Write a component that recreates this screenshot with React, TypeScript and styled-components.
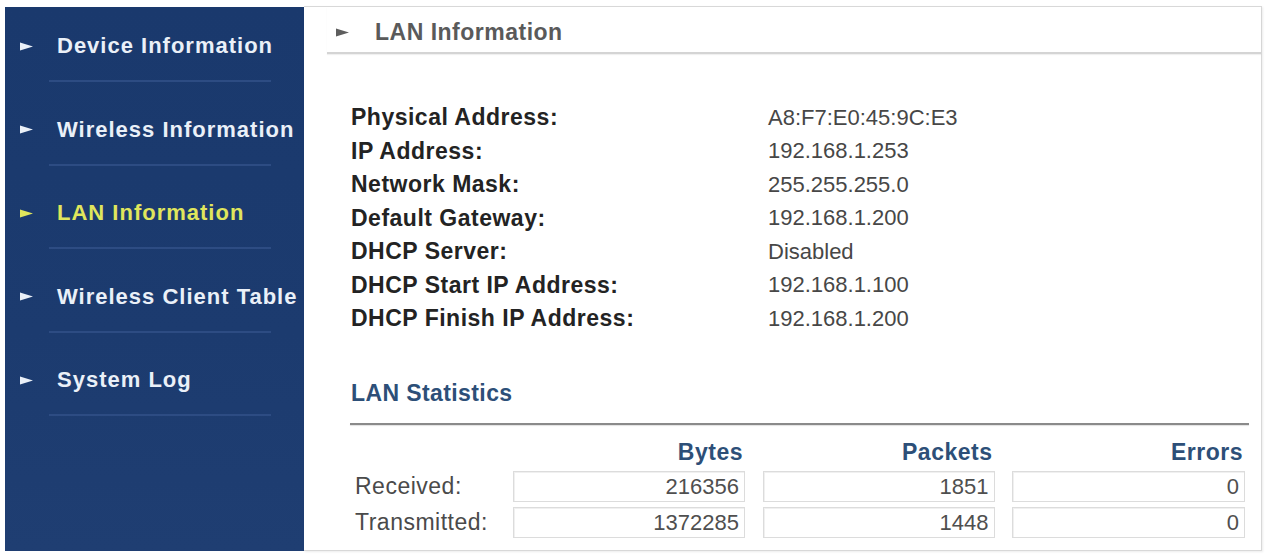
import styled, { createGlobalStyle } from "styled-components";

const GlobalStyle = createGlobalStyle`
  html, body {
    margin: 0;
    padding: 0;
    background: #ffffff;
    font-family: "Liberation Sans", Arial, sans-serif;
  }
`;

const menu = [
  { id: 1, text: "Device Information" },
  { id: 2, text: "Wireless Information" },
  { id: 3, text: "LAN Information", active: true },
  { id: 4, text: "Wireless Client Table" },
  { id: 5, text: "System Log" },
];

const lanInfo = [
  ["Physical Address:", "A8:F7:E0:45:9C:E3"],
  ["IP Address:", "192.168.1.253"],
  ["Network Mask:", "255.255.255.0"],
  ["Default Gateway:", "192.168.1.200"],
  ["DHCP Server:", "Disabled"],
  ["DHCP Start IP Address:", "192.168.1.100"],
  ["DHCP Finish IP Address:", "192.168.1.200"],
];

const stats = [
  { label: "Received:", bytes: 216356, packets: 1851, errors: 0 },
  { label: "Transmitted:", bytes: 1372285, packets: 1448, errors: 0 },
];

// small right-pointing triangle used as the menu bullet
const Arrow = ({ color }: { color: string }) => (
  <svg width="13" height="9" viewBox="0 0 13 9">
    <polygon points="0,0.5 13,4.5 0,8.5" fill={color} />
  </svg>
);

const App = () => {
  return (
    <>
      <GlobalStyle />
      <Page>
        <Sidebar>
          {menu.map((item) => (
            <NavBlock key={item.id}>
              <NavItem $active={!!item.active}>
                <Arrow color={item.active ? "#e0e65c" : "#eaf0f8"} />
                <span>{item.text}</span>
              </NavItem>
              <NavDivider />
            </NavBlock>
          ))}
        </Sidebar>
        <Content>
          <PanelHeader>
            <Arrow color="#5e5e5e" />
            <span>LAN Information</span>
          </PanelHeader>
          <InfoGrid>
            {lanInfo.map(([label, value]) => (
              <InfoRow key={label}>
                <InfoLabel>{label}</InfoLabel>
                <InfoValue>{value}</InfoValue>
              </InfoRow>
            ))}
          </InfoGrid>
          <SectionTitle>LAN Statistics</SectionTitle>
          <SectionRule />
          <StatsTable>
            <StatsHead />
            <StatsHead>Bytes</StatsHead>
            <StatsHead>Packets</StatsHead>
            <StatsHead>Errors</StatsHead>
            {stats.map((row) => (
              <StatsRow key={row.label}>
                <RowLabel>{row.label}</RowLabel>
                <Cell>{row.bytes}</Cell>
                <Cell>{row.packets}</Cell>
                <Cell>{row.errors}</Cell>
              </StatsRow>
            ))}
          </StatsTable>
        </Content>
      </Page>
    </>
  );
};
export default App;

const Page = styled.div`
  display: flex;
  box-sizing: border-box;
  height: 559px;
  padding: 7px 6px 8px 5px;
`;

const Sidebar = styled.nav`
  width: 299px;
  flex-shrink: 0;
  background: linear-gradient(180deg, #1a396d 0%, #1c3b6f 60%, #1f3e72 100%);
`;

const NavBlock = styled.div`
  height: 83.5px;
  box-sizing: border-box;
  padding-top: 24px;
`;

const NavItem = styled.div<{ $active: boolean }>`
  display: flex;
  align-items: center;
  height: 30px;
  padding-left: 15px;
  gap: 24px;
  font-size: 22px;
  font-weight: 700;
  letter-spacing: 1px;
  color: ${({ $active }) => ($active ? "#e0e65c" : "#eaf0f8")};
  white-space: nowrap;
`;

const NavDivider = styled.div`
  margin: 19px 33px 0 44px;
  height: 2px;
  background: #2d4c83;
`;

const Content = styled.main`
  flex: 1;
  margin-top: -1px;
  border: 1px solid #d8d8d8;
  border-left: none;
  box-shadow: 1px 1px 2px rgba(0, 0, 0, 0.08);
  padding: 0 0 0 23px;
  display: flex;
  flex-direction: column;
`;

const PanelHeader = styled.h2`
  margin: 0;
  display: flex;
  align-items: center;
  gap: 26px;
  height: 39px;
  padding: 6px 0 0 9px;
  border-bottom: 2px solid #d4d4d4;
  box-shadow: 0 1px 1px rgba(0, 0, 0, 0.06);
  font-size: 23px;
  font-weight: 700;
  letter-spacing: 0.5px;
  color: #5a5a5a;
`;

const InfoGrid = styled.div`
  margin-top: 47px;
  padding-left: 24px;
`;

const InfoRow = styled.div`
  display: grid;
  grid-template-columns: 417px 1fr;
  height: 33.5px;
  align-items: center;
`;

const InfoLabel = styled.span`
  font-size: 23px;
  font-weight: 700;
  letter-spacing: 0.5px;
  color: #232323;
`;

const InfoValue = styled.span`
  font-size: 22px;
  color: #474747;
`;

const SectionTitle = styled.h3`
  margin: 42px 0 0 24px;
  font-size: 23px;
  font-weight: 700;
  letter-spacing: 0.4px;
  color: #2d4f78;
  line-height: 30px;
`;

const SectionRule = styled.div`
  margin: 15px 12px 0 23px;
  height: 2px;
  background: #8a8a8a;
  box-shadow: 0 1px 1px rgba(0, 0, 0, 0.12);
`;

const StatsTable = styled.div`
  display: grid;
  grid-template-columns: 144.5px 232px 232px 233px;
  column-gap: 17.5px;
  margin: 12px 0 0 24px;
`;

const StatsHead = styled.div`
  font-size: 23px;
  font-weight: 700;
  letter-spacing: 0.5px;
  color: #2d4f78;
  text-align: right;
  padding-right: 2px;
  height: 34px;
  line-height: 31px;
`;

const StatsRow = styled.div`
  display: contents;
`;

const RowLabel = styled.div`
  font-size: 23px;
  letter-spacing: 0.5px;
  color: #4a4a4a;
  height: 31px;
  line-height: 31px;
  margin-bottom: 5px;
  padding-left: 4px;
  white-space: nowrap;
`;

const Cell = styled.div`
  box-sizing: border-box;
  height: 31px;
  line-height: 29px;
  border: 1px solid #dcdcdc;
  box-shadow: inset 1px 1px 0 #f0f0f0;
  text-align: right;
  padding-right: 5px;
  font-size: 22px;
  color: #4f4f4f;
  margin-bottom: 5px;
`;
